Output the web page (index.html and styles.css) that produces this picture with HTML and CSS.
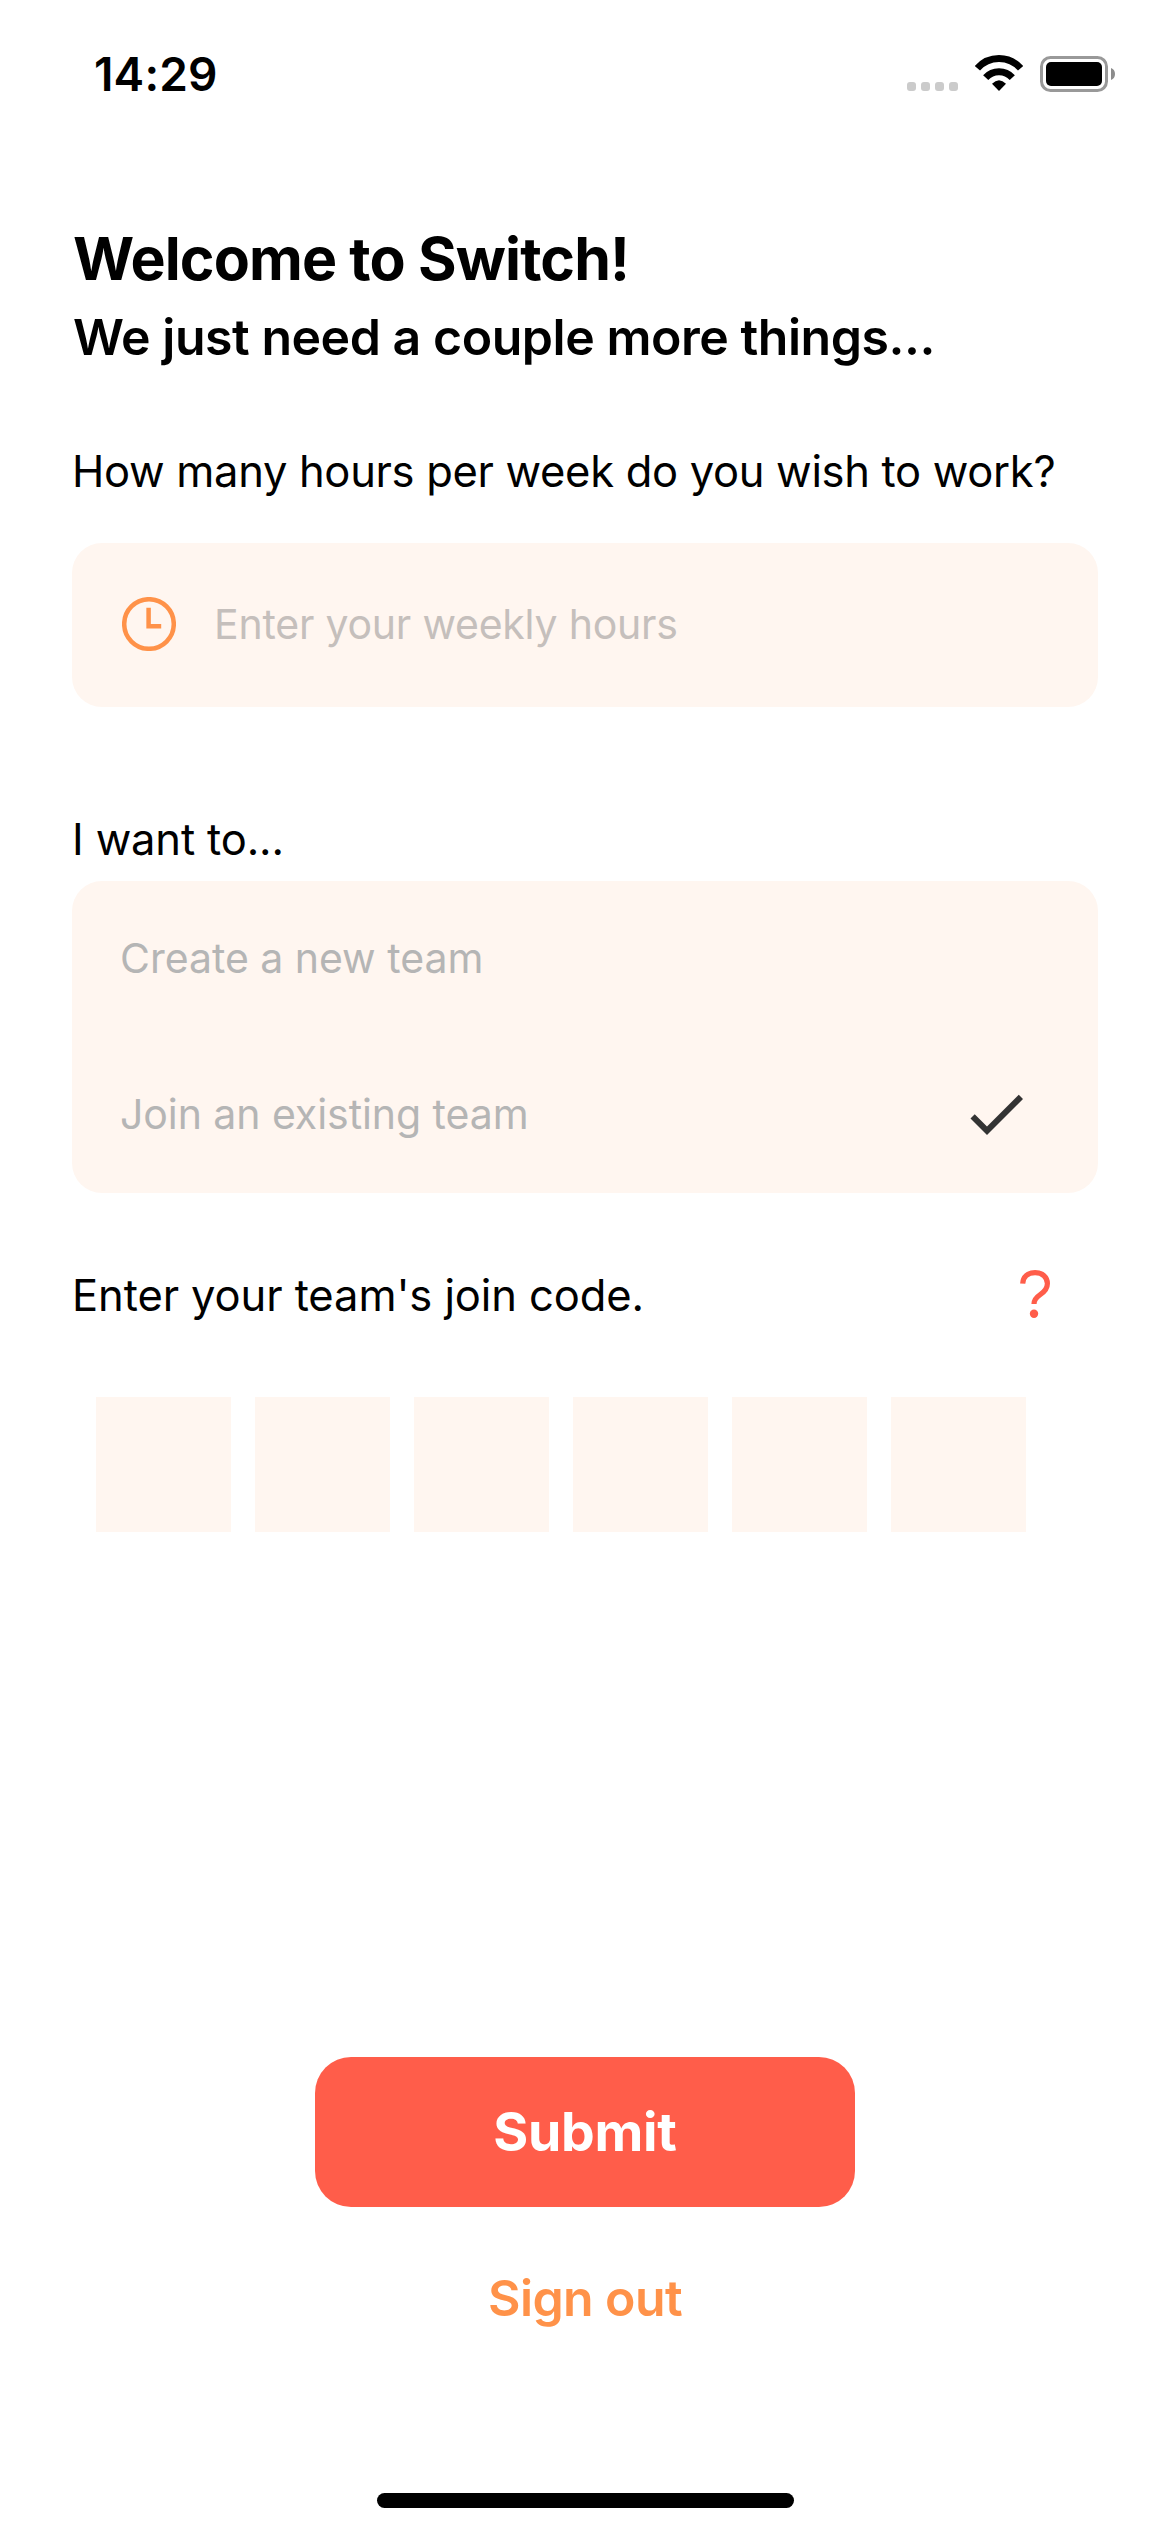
FILE: index.html
```html
<!DOCTYPE html>
<html lang="en">
<head>
<meta charset="utf-8">
<title>Welcome to Switch</title>
<link rel="stylesheet" href="styles.css">
</head>
<body>
<div class="screen">
  <header class="status">
    <span class="time">14:29</span>
    <span class="status-icons">
      <svg width="51" height="38" viewBox="0 0 51 38" fill="#cbcbcb">
        <rect x="0" y="27" width="9" height="9" rx="3"/>
        <rect x="14" y="27" width="9" height="9" rx="3"/>
        <rect x="28" y="27" width="9" height="9" rx="3"/>
        <rect x="42" y="27" width="9" height="9" rx="3"/>
      </svg>
      <svg width="48" height="38" viewBox="0 0 48 38" fill="none" stroke="#000" stroke-width="7">
        <path d="M2.4 13.3A28.8 28.8 0 0 1 45.6 13.3"/>
        <path d="M10.7 22.6A18 18 0 0 1 37.3 22.6"/>
        <path d="M17 28.8Q24 21.6 31 28.8L24 36Z" fill="#000" stroke="none"/>
      </svg>
      <svg width="75" height="38" viewBox="0 0 75 38">
        <rect x="1.5" y="2.5" width="65" height="33" rx="9" fill="none" stroke="#999" stroke-width="3"/>
        <rect x="6" y="7" width="56" height="24" rx="5"/>
        <path d="M71 13Q75 14.5 75 19T71 25Z" fill="#8c8c8c"/>
      </svg>
    </span>
  </header>

  <main class="content">
    <h1 class="title">Welcome to Switch!</h1>
    <h2 class="subtitle">We just need a couple more things...</h2>

    <p class="label label-hours">How many hours per week do you wish to work?</p>
    <div class="card hours">
      <svg width="54" height="54" viewBox="0 0 54 54" fill="none" stroke="#ff9249" stroke-width="4.5">
        <circle cx="27" cy="27" r="24.8"/>
        <path d="M26.6 10.7V29.2H39.2"/>
      </svg>
      <span class="placeholder">Enter your weekly hours</span>
    </div>

    <p class="label label-want">I want to...</p>
    <div class="card options">
      <div class="option">Create a new team</div>
      <div class="option">
        <span class="option-join">Join an existing team</span>
        <svg width="72" height="72" viewBox="0 0 24 24" fill="#333"><path d="M21 7 9 19 3.5 13.5 4.91 12.09 9 16.17 19.59 5.59Z"/></svg>
      </div>
    </div>

    <div class="code-row">
      <p class="label label-code">Enter your team's join code.</p>
      <svg width="30" height="50" viewBox="0 0 30 50" fill="none" stroke="#ff5d4a" stroke-width="5.2">
        <path d="M2.7 13.6C3 6.8 8 2.6 15.1 2.6 22.4 2.6 27.4 7.2 27.4 13.6 27.4 19.2 24.6 21.8 20.2 24.7 15.8 27.7 14 30.2 14 34"/>
        <circle cx="14" cy="43.7" r="4.2" fill="#ff5d4a" stroke="none"/>
      </svg>
    </div>
    <div class="code">
      <i class="cell"></i><i class="cell"></i><i class="cell"></i><i class="cell"></i><i class="cell"></i><i class="cell"></i>
    </div>
  </main>

  <footer class="actions">
    <div class="submit">Submit</div>
    <div class="signout">Sign out</div>
    <div class="home"></div>
  </footer>
</div>
</body>
</html>
```
FILE: styles.css
```css
* { box-sizing: border-box; }

body {
  margin: 0;
  background: #fff;
  color: #000;
  font-family: Inter, "Liberation Sans", sans-serif;
}

h1, h2, p { margin: 0; }
svg { display: block; flex: none; }

.screen {
  display: flex;
  flex-direction: column;
  width: 1170px;
  height: 2532px;
}

.status {
  display: flex;
  justify-content: space-between;
  align-items: center;
  height: 102px;
  padding: 46px 55px 0 94px;
}

.time {
  font-size: 46px;
  font-weight: 600;
  line-height: 56px;
  letter-spacing: 0.15px;
}

.status-icons { display: flex; gap: 17px; }

.content { padding: 121px 72px 0; }

.title {
  padding-left: 1px;
  font-size: 59px;
  font-weight: 700;
  line-height: 72px;
  letter-spacing: -0.865px;
}

.subtitle {
  margin-top: 12px;
  padding-left: 1px;
  font-size: 50px;
  font-weight: 600;
  line-height: 60px;
  letter-spacing: -0.46px;
}

.label {
  font-size: 43.5px;
  line-height: 54px;
  white-space: nowrap;
}

.label-hours { margin-top: 77px; letter-spacing: -0.309px; }
.label-want { margin-top: 105px; letter-spacing: -0.142px; }
.label-code { letter-spacing: -0.09px; }

.card {
  border-radius: 30px;
  background: #fff6f0;
}

.hours {
  display: flex;
  align-items: center;
  gap: 38px;
  height: 164px;
  margin-top: 45px;
  padding: 0 50px 2px;
}

.placeholder {
  color: #c5bfbc;
  font-size: 41px;
  letter-spacing: -0.219px;
}

.options {
  height: 312px;
  margin-top: 15px;
  padding: 0 66px 0 48px;
}

.option {
  display: flex;
  align-items: center;
  justify-content: space-between;
  height: 156px;
  padding-bottom: 2px;
  color: #b5b5b5;
  font-size: 41px;
  letter-spacing: -0.027px;
}

.option-join { letter-spacing: -0.063px; }

.code-row {
  display: flex;
  justify-content: space-between;
  margin-top: 75px;
  padding-right: 48px;
}

.code-row svg { margin-top: 2px; }

.code {
  display: flex;
  gap: 24px;
  margin: 75px 0 0 24px;
}

.cell {
  width: 135px;
  height: 135px;
  background: #fff6f0;
}

.actions {
  display: flex;
  flex-direction: column;
  align-items: center;
  margin-top: auto;
  padding-bottom: 24px;
}

.submit {
  width: 540px;
  height: 150px;
  border-radius: 36px;
  background: #ff5d4a;
  color: #fff;
  font-size: 53.5px;
  font-weight: 700;
  line-height: 149px;
  letter-spacing: -0.277px;
  text-align: center;
}

.signout {
  margin-top: 61px;
  color: #ff9249;
  font-size: 50px;
  font-weight: 600;
  line-height: 60px;
  letter-spacing: -0.59px;
}

.home {
  width: 417px;
  height: 15px;
  margin-top: 165px;
  border-radius: 8px;
  background: #000;
}
```
